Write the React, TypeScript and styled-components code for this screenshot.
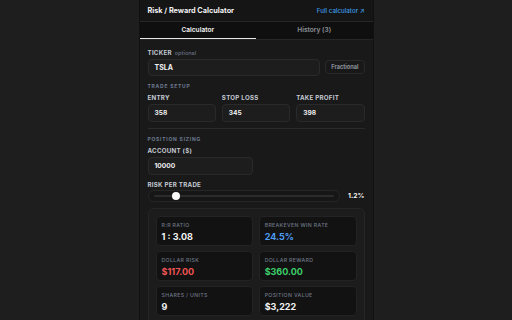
import React from 'react';
import styled, { createGlobalStyle } from 'styled-components';

const GlobalStyle = createGlobalStyle`
  html, body {
    margin: 0;
    padding: 0;
    background: #1f1e1f;
    font-family: Inter, "Liberation Sans", sans-serif;
    -webkit-font-smoothing: antialiased;
  }
`;

const Panel = styled.div`
  width: 235px;
  margin: 0 auto;
  min-height: 330px;
  background: #191919;
  border-left: 1px solid #111;
  border-right: 1px solid #111;
  box-sizing: border-box;
`;

const Header = styled.div`
  height: 21px;
  padding: 0 8px;
  display: flex;
  align-items: center;
  justify-content: space-between;
  background: #151515;
  border-bottom: 1px solid #262626;
`;

const Title = styled.div`
  font-size: 7.3px;
  font-weight: 700;
  color: #f2f2f2;
`;

const HeaderLink = styled.a`
  font-size: 6.2px;
  font-weight: 500;
  color: #3d9be6;
  text-decoration: none;
`;

const Tabs = styled.div`
  display: grid;
  grid-template-columns: 1fr 1fr;
  background: #0f0f0f;
  border-bottom: 1px solid #262626;
`;

const Tab = styled.div<{ $active?: boolean }>`
  height: 16px;
  display: flex;
  align-items: center;
  justify-content: center;
  font-size: 6.6px;
  font-weight: 600;
  color: ${(p) => (p.$active ? '#f2f2f2' : '#8b8f98')};
  border-bottom: 1.5px solid ${(p) => (p.$active ? '#e8e8e8' : 'transparent')};
`;

const Body = styled.div`
  padding: 9px 8px 0 8px;
  display: flex;
  flex-direction: column;
`;

const Field = styled.div<{ $mt?: number }>`
  display: flex;
  flex-direction: column;
  gap: 2.5px;
  margin-top: ${(p) => p.$mt ?? 0}px;
`;

const Label = styled.div`
  height: 7px;
  line-height: 7px;
  font-size: 6.2px;
  font-weight: 700;
  letter-spacing: 0.25px;
  color: #c3c8d2;
  text-transform: uppercase;
`;

const Hint = styled.span`
  font-size: 5.4px;
  font-weight: 500;
  letter-spacing: 0.1px;
  text-transform: none;
  color: #6a7283;
  margin-left: 3px;
`;

const SectionTitle = styled.div<{ $mt: number }>`
  margin-top: ${(p) => p.$mt}px;
  height: 6px;
  line-height: 6px;
  font-size: 5px;
  font-weight: 700;
  letter-spacing: 0.75px;
  color: #6c7a90;
  text-transform: uppercase;
`;

const TickerRow = styled.div`
  display: flex;
  align-items: center;
  gap: 5px;
`;

const Input = styled.div<{ $h?: number }>`
  height: ${(p) => p.$h ?? 18}px;
  flex: none;
  box-sizing: border-box;
  display: flex;
  align-items: center;
  padding: 0 6px;
  background: #1d1d1d;
  border: 1px solid #2a2a2a;
  border-radius: 4px;
  font-size: 6.6px;
  font-weight: 700;
  color: #f0f0f0;
`;

const TickerInput = styled(Input)`
  flex: 1;
  font-size: 7px;
`;

const Chip = styled.div`
  height: 14px;
  box-sizing: border-box;
  padding: 0 5px;
  display: flex;
  align-items: center;
  border: 1px solid #292929;
  border-radius: 4px;
  background: #181818;
  font-size: 5.6px;
  font-weight: 700;
  color: #8c919b;
`;

const Grid = styled.div<{ $cols: number; $mt: number }>`
  display: grid;
  grid-template-columns: repeat(${(p) => p.$cols}, 1fr);
  column-gap: 6px;
  margin-top: ${(p) => p.$mt}px;
`;

const Divider = styled.div`
  height: 1px;
  background: #2a2a2a;
  margin-top: 6.5px;
`;

const SliderRow = styled.div`
  display: flex;
  align-items: center;
  gap: 8px;
`;

const Track = styled.div`
  position: relative;
  flex: 1;
  height: 11.5px;
  box-sizing: border-box;
  border: 1px solid #262626;
  border-radius: 6px;
  background: #161616;
  display: flex;
  align-items: center;
  padding: 0 5px;
`;

const Rail = styled.div`
  flex: 1;
  height: 1.5px;
  border-radius: 1px;
  background: #2c2c2c;
`;

const Thumb = styled.div`
  position: absolute;
  top: 50%;
  width: 8px;
  height: 8px;
  margin: -4px 0 0 -4px;
  border-radius: 50%;
  background: #fafafa;
`;

const SliderValue = styled.div`
  font-size: 6.8px;
  font-weight: 700;
  color: #f0f0f0;
`;

const Card = styled.div`
  margin-top: 6.5px;
  padding: 7px;
  background: #1c1c1c;
  border: 1px solid #262626;
  border-radius: 6px;
  display: grid;
  grid-template-columns: 1fr 1fr;
  gap: 5.3px;
`;

const Stat = styled.div`
  height: 29.7px;
  box-sizing: border-box;
  padding: 5px 5px 0 5px;
  background: #121212;
  border: 1px solid #232323;
  border-radius: 4px;
  display: flex;
  flex-direction: column;
  gap: 2.5px;
`;

const StatLabel = styled.div`
  font-size: 5.2px;
  line-height: 6px;
  font-weight: 500;
  letter-spacing: 0.35px;
  color: #6f7787;
  text-transform: uppercase;
`;

const StatValue = styled.div<{ $color?: string }>`
  font-size: 9px;
  line-height: 11px;
  font-weight: 700;
  color: ${(p) => p.$color ?? '#f2f2f2'};
`;

interface StatItem {
  label: string;
  value: string;
  color?: string;
}

const stats: StatItem[] = [
  { label: 'R:R Ratio', value: '1 : 3.08' },
  { label: 'Breakeven win rate', value: '24.5%', color: '#4f9cf0' },
  { label: 'Dollar risk', value: '$117.00', color: '#f05454' },
  { label: 'Dollar reward', value: '$360.00', color: '#3ccf6a' },
  { label: 'Shares / Units', value: '9' },
  { label: 'Position value', value: '$3,222' },
];

const risk = 1.2;
const riskMin = 0.5;
const riskMax = 6;

export default function App() {
  const thumbPos = (risk - riskMin) / (riskMax - riskMin);

  return (
    <>
      <GlobalStyle />
      <Panel>
        <Header>
          <Title>Risk / Reward Calculator</Title>
          <HeaderLink href="#">Full calculator ↗</HeaderLink>
        </Header>
        <Tabs>
          <Tab $active>Calculator</Tab>
          <Tab>History (3)</Tab>
        </Tabs>
        <Body>
          <Field>
            <Label>
              Ticker<Hint>optional</Hint>
            </Label>
            <TickerRow>
              <TickerInput $h={17}>TSLA</TickerInput>
              <Chip>Fractional</Chip>
            </TickerRow>
          </Field>

          <SectionTitle $mt={7}>Trade setup</SectionTitle>
          <Grid $cols={3} $mt={5.5}>
            <Field>
              <Label>Entry</Label>
              <Input>358</Input>
            </Field>
            <Field>
              <Label>Stop loss</Label>
              <Input>345</Input>
            </Field>
            <Field>
              <Label>Take profit</Label>
              <Input>398</Input>
            </Field>
          </Grid>

          <Divider />

          <SectionTitle $mt={6.5}>Position sizing</SectionTitle>
          <Grid $cols={2} $mt={5.8}>
            <Field>
              <Label>Account ($)</Label>
              <Input>10000</Input>
            </Field>
          </Grid>

          <Field $mt={5.8}>
            <Label>Risk per trade</Label>
            <SliderRow>
              <Track>
                <Rail />
                <Thumb style={{ left: `calc(5px + (100% - 10px) * ${thumbPos})` }} />
              </Track>
              <SliderValue>{risk}%</SliderValue>
            </SliderRow>
          </Field>

          <Card>
            {stats.map((s) => (
              <Stat key={s.label}>
                <StatLabel>{s.label}</StatLabel>
                <StatValue $color={s.color}>{s.value}</StatValue>
              </Stat>
            ))}
          </Card>
        </Body>
      </Panel>
    </>
  );
}
